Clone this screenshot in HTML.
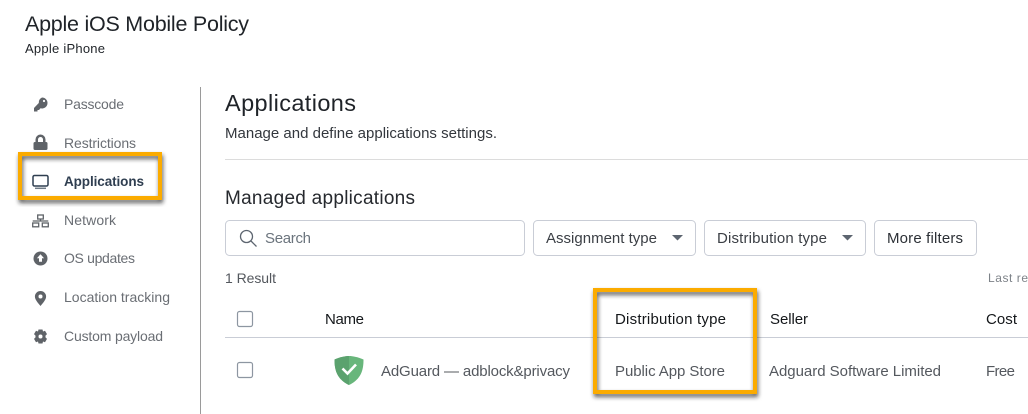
<!DOCTYPE html>
<html>
<head>
<meta charset="utf-8">
<style>
html,body{margin:0;padding:0;background:#fff;width:1028px;height:414px;overflow:hidden}
svg{display:block}
text{font-family:"Liberation Sans",sans-serif}
</style>
</head>
<body>
<svg width="1028" height="414" viewBox="0 0 1028 414" xmlns="http://www.w3.org/2000/svg">
<defs>
<filter id="s" x="-20%" y="-20%" width="140%" height="140%"><feDropShadow dx="1" dy="3" stdDeviation="2" flood-color="#222" flood-opacity=".75"/></filter>
</defs>
<rect width="1028" height="414" fill="#fff"/>

<text x="25" y="31" font-size="21.500" fill="#1f2328" textLength="224">Apple iOS Mobile Policy</text>
<text x="25" y="53" font-size="13" fill="#1f2328" textLength="80">Apple iPhone</text>

<rect x="200" y="87" width="1" height="327" fill="#9a9a9a"/>

<g font-size="14" fill="#6a6e74">
<text x="64" y="109" textLength="60">Passcode</text>
<text x="64" y="148" textLength="72">Restrictions</text>
<text x="64" y="225" textLength="52">Network</text>
<text x="64" y="263" textLength="71">OS updates</text>
<text x="64" y="302" textLength="106">Location tracking</text>
<text x="64" y="341" textLength="99">Custom payload</text>
</g>
<text x="64" y="186" font-size="13.500" font-weight="700" fill="#2f3e50" textLength="80">Applications</text>

<!-- key -->
<g fill="#5f6368">
<path d="M42 97.500a5.500 5.500 0 0 1 5.500 5.500a5.500 5.500 0 0 1-7 5.300L39 110h-1.500v1.500H34V108l4.800-5A5.500 5.500 0 0 1 42 97.500z"/>
<circle cx="44" cy="101" r="1.100" fill="#fff"/>
<!-- lock -->
<path d="M35.500 142v-2.500a5 5 0 0 1 10 0V142h.5a1.500 1.500 0 0 1 1.500 1.500v5A1.500 1.500 0 0 1 46 150H35a1.500 1.500 0 0 1-1.500-1.500v-5A1.500 1.500 0 0 1 35 142zm2.500 0h5v-2.500a2.500 2.500 0 0 0-5 0z"/>
<!-- up arrow circle -->
<circle cx="40.500" cy="258.500" r="7"/>
<path d="M40.500 254.200l3.600 4H42v3.600h-3v-3.600h-2.100z" fill="#fff"/>
<!-- pin -->
<path d="M40.500 291a5.600 5.600 0 0 1 5.600 5.600c0 3-3.300 6.500-5.600 9.400c-2.300-2.900-5.600-6.400-5.600-9.400A5.600 5.600 0 0 1 40.500 291z"/>
<circle cx="40.500" cy="296.500" r="2" fill="#fff"/>
<!-- gear -->
<path d="M38.500 329.500h4l.5 2 2-.8 2 3.400-1.500 1.500v1.800l1.500 1.500-2 3.400-2-.8-.5 2h-4l-.5-2-2 .8-2-3.400 1.500-1.500v-1.800l-1.500-1.500 2-3.400 2 .8z"/>
<circle cx="40.500" cy="336.500" r="2" fill="#fff"/>
</g>
<!-- network -->
<g fill="none" stroke="#5f6368" stroke-width="1.300">
<rect x="37.700" y="215" width="5.600" height="4"/>
<rect x="32.700" y="223" width="6" height="3.800"/>
<rect x="42.300" y="223" width="6" height="3.800"/>
<path d="M40.500 219v2M32.700 221h15.600"/>
</g>
<!-- monitor -->
<g fill="none" stroke="#2f3e50">
<rect x="33" y="175.500" width="15" height="10.500" rx="1.500" stroke-width="1.500"/>
<path d="M35 188.300h11" stroke-width="1.500" stroke="#6f7a86"/>
</g>

<text x="225" y="111" font-size="23.500" fill="#1f2328" textLength="131">Applications</text>
<text x="225" y="138" font-size="15" fill="#33373d" textLength="272">Manage and define applications settings.</text>
<rect x="225" y="159" width="803" height="1" fill="#dcdcdc"/>
<text x="225" y="204" font-size="19" fill="#26292e" textLength="190">Managed applications</text>

<!-- Search -->
<rect x="225.500" y="220.500" width="299" height="35" rx="4" fill="#fff" stroke="#c9cdd6"/>
<circle cx="246.500" cy="236.500" r="6" fill="none" stroke="#5d6570" stroke-width="1.300"/>
<path d="M251 241l5.500 5.500" stroke="#5d6570" stroke-width="1.300" fill="none"/>
<text x="265" y="243" font-size="15" fill="#6b747d" textLength="46">Search</text>

<!-- Filters -->
<rect x="533.500" y="220.500" width="162" height="35" rx="4" fill="#fff" stroke="#c9cdd6"/>
<text x="546" y="243" font-size="15" fill="#3b3f45" textLength="111">Assignment type</text>
<path d="M672 235h11l-5.500 5.500z" fill="#5d6570"/>
<rect x="704.500" y="220.500" width="161" height="35" rx="4" fill="#fff" stroke="#c9cdd6"/>
<text x="717" y="243" font-size="15" fill="#3b3f45" textLength="110">Distribution type</text>
<path d="M842 235h11l-5.500 5.500z" fill="#5d6570"/>
<rect x="874.500" y="220.500" width="102" height="35" rx="4" fill="#fff" stroke="#c9cdd6"/>
<text x="887" y="243" font-size="15" fill="#2c3036" textLength="76">More filters</text>

<text x="225" y="283" font-size="14" fill="#53575d" textLength="51">1 Result</text>
<text x="988" y="282" font-size="12" fill="#7d8288" textLength="40">Last re</text>

<!-- Table -->
<rect x="225" y="337" width="803" height="1" fill="#c9cdd6"/>
<rect x="237.500" y="311.500" width="15" height="15" rx="2" fill="#fff" stroke="#8d96a1" stroke-width="1.200"/>
<rect x="237.500" y="362.500" width="15" height="15" rx="2" fill="#fff" stroke="#8d96a1" stroke-width="1.200"/>

<g font-size="15" fill="#14171a">
<text x="325" y="324" textLength="39">Name</text>
<text x="615" y="324" textLength="111">Distribution type</text>
<text x="770" y="324" textLength="38">Seller</text>
<text x="986" y="324" textLength="31">Cost</text>
</g>
<g font-size="15" fill="#54585e">
<text x="381" y="376" textLength="189">AdGuard — adblock&amp;privacy</text>
<text x="615" y="376" textLength="110">Public App Store</text>
<text x="769" y="376" textLength="172">Adguard Software Limited</text>
<text x="986" y="376" textLength="29">Free</text>
</g>

<!-- AdGuard shield -->
<path d="M349 356c-4 0-8.500 1-14.500 3.500c0 10 2 19.500 14.500 25.500c12.500-6 14.500-15.500 14.500-25.500C357.500 357 353 356 349 356z" fill="#68b67b"/>
<path d="M349 356c-4 0-8.500 1-14.500 3.500c0 10 2 19.500 14.500 25.500z" fill="#5ba26e"/>
<path d="M342.500 368.500l5 5l8.500-9" fill="none" stroke="#fff" stroke-width="2.600"/>

<!-- Highlights -->
<rect x="20" y="154" width="140" height="44" fill="none" stroke="#fbab05" stroke-width="4" filter="url(#s)"/>
<rect x="595" y="290" width="160" height="102" fill="none" stroke="#fbab05" stroke-width="4" filter="url(#s)"/>
</svg>
</body>
</html>
